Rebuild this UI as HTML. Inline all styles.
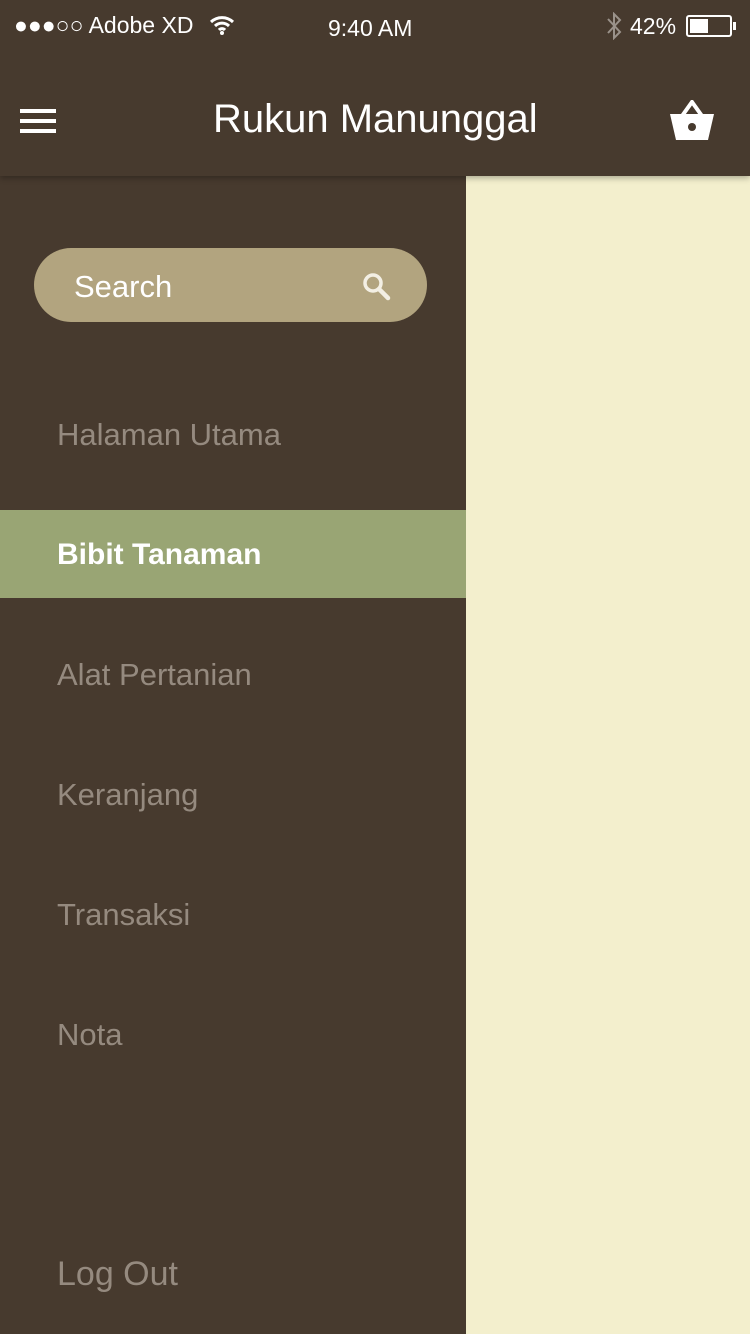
<!DOCTYPE html>
<html><head><meta charset="utf-8"><style>
*{margin:0;padding:0;box-sizing:border-box}
body{width:750px;height:1334px;background:#f3efcd;font-family:"Liberation Sans",sans-serif;position:relative;overflow:hidden}
.top{position:absolute;left:0;top:0;width:750px;height:176px;background:#473a2e;box-shadow:0 2px 6px rgba(0,0,0,.3);z-index:2}
.side{position:absolute;left:0;top:176px;width:466px;height:1158px;background:#473a2e}
.t{position:absolute;color:#fff;white-space:nowrap}
.item{position:absolute;left:57px;font-family:"Liberation Sans",sans-serif;font-size:31px;color:#958a7f}
</style></head><body>
<div class="top">
<div class="t" style="left:14px;top:12px;font-size:23px">●●●○○ Adobe XD</div>
<svg style="position:absolute;left:209px;top:14px" width="26" height="22" viewBox="0 0 26 22"><path d="M2 8a16 16 0 0 1 22 0M6 12a10 10 0 0 1 14 0M10 16a4 4 0 0 1 6 0" stroke="#fff" stroke-width="3" fill="none"/><circle cx="13" cy="19" r="2" fill="#fff"/></svg>
<div class="t" style="left:328px;top:15px;font-size:23px">9:40 AM</div>
<svg style="position:absolute;left:605px;top:12px" width="18" height="28" viewBox="0 0 18 28"><path d="M3 7L15 20L9 26V2L15 8L3 21" stroke="#9a928a" stroke-width="2" fill="none"/></svg>
<div class="t" style="left:630px;top:13px;font-size:23px">42%</div>
<div style="position:absolute;left:686px;top:15px;width:46px;height:22px;border:2px solid #fff;border-radius:3px"><div style="width:18px;height:14px;margin:2px;background:#fff"></div></div>
<div style="position:absolute;left:733px;top:22px;width:3px;height:8px;background:#fff"></div>
<div style="position:absolute;left:20px;top:109px;width:36px;height:4px;background:#fff;box-shadow:0 10px #fff,0 20px #fff"></div>
<div class="t" style="left:213px;top:97px;font-size:40px">Rukun Manunggal</div>
<svg style="position:absolute;left:668px;top:100px" width="48" height="42" viewBox="0 0 48 42"><path d="M14 16L24 2L34 16" stroke="#fff" stroke-width="4" fill="none"/><path d="M2 14H46L40 40H8Z" fill="#fff"/><circle cx="24" cy="27" r="4" fill="#473a2e"/></svg>
</div>
<div class="side">
<div style="position:absolute;left:34px;top:72px;width:393px;height:74px;border-radius:37px;background:#b2a47f"></div>
<div class="t" style="left:74px;top:93px;font-size:31px">Search</div>
<svg style="position:absolute;left:362px;top:96px" width="30" height="30" viewBox="0 0 30 30"><circle cx="11" cy="11" r="8" stroke="#f3efe4" stroke-width="3.5" fill="none"/><path d="M17 17L26 26" stroke="#f3efe4" stroke-width="4.5" stroke-linecap="round"/></svg>
<div class="item" style="top:241px">Halaman Utama</div>
<div style="position:absolute;left:0;top:334px;width:466px;height:88px;background:#99a574"></div>
<div class="item" style="top:362px;color:#fff;font-weight:bold;font-size:30px">Bibit Tanaman</div>
<div class="item" style="top:481px">Alat Pertanian</div>
<div class="item" style="top:601px">Keranjang</div>
<div class="item" style="top:721px">Transaksi</div>
<div class="item" style="top:841px">Nota</div>
<div class="item" style="top:1079px;font-size:34px">Log Out</div>
</div>
</body></html>
